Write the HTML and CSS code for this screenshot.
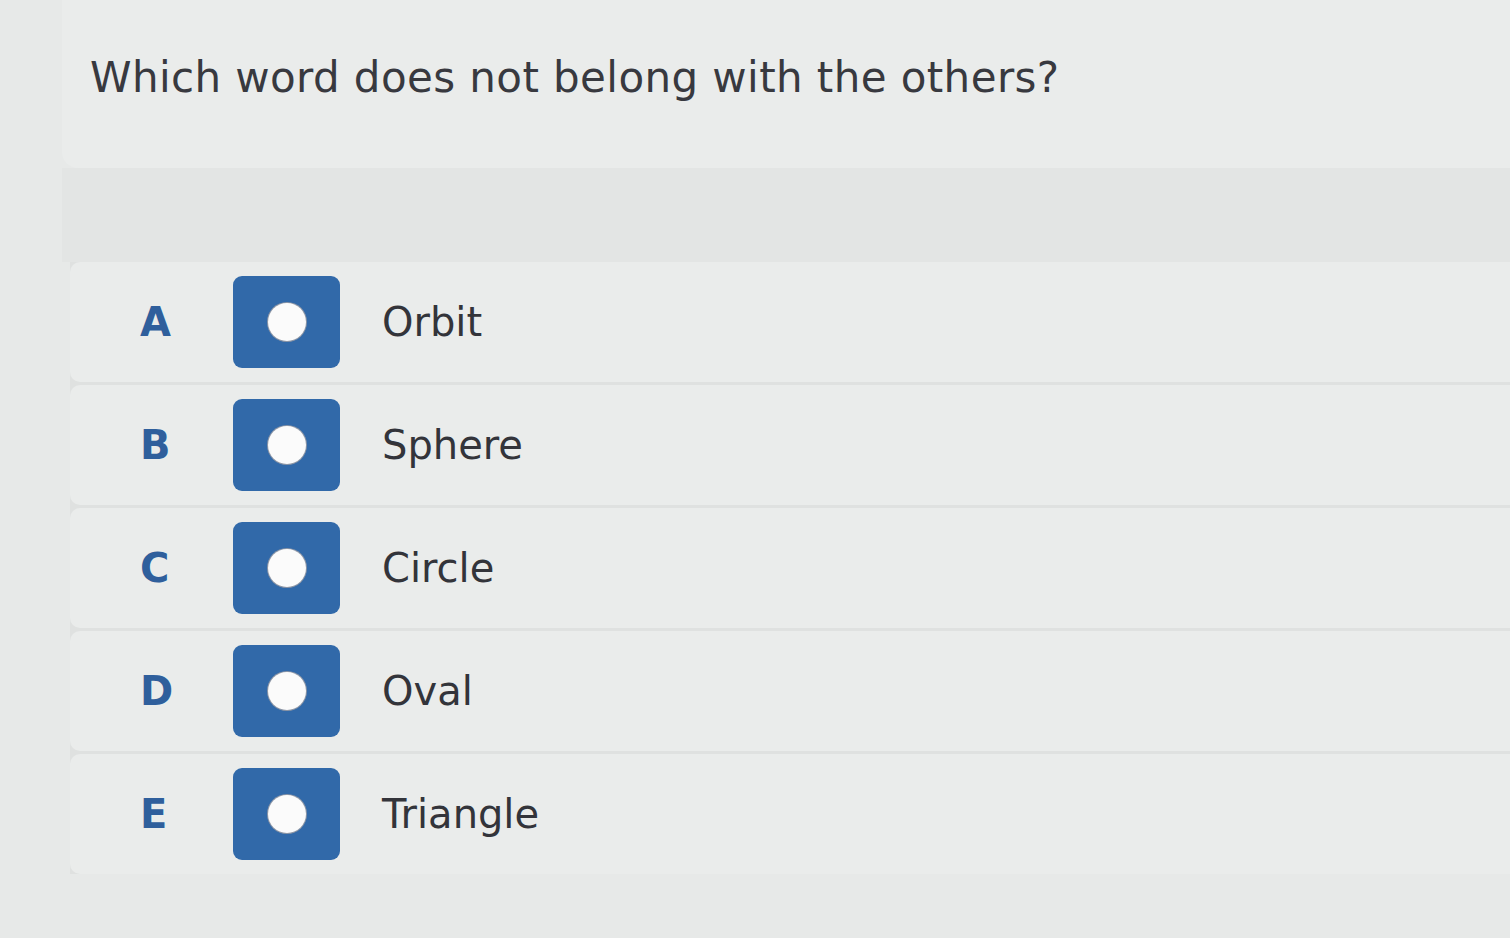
FILE: index.html
```html
<!DOCTYPE html>
<html>
<head>
<meta charset="utf-8">
<link rel="stylesheet" href="styles.css">
</head>
<body>
<div class="page">
  <div class="question">Which word does not belong with the others?</div>
  <div class="band"></div>
  <div class="options">
    <div class="option"><span class="letter">A</span><span class="radio"><span class="dot"></span></span><span class="label">Orbit</span></div>
    <div class="option"><span class="letter">B</span><span class="radio"><span class="dot"></span></span><span class="label">Sphere</span></div>
    <div class="option"><span class="letter">C</span><span class="radio"><span class="dot"></span></span><span class="label">Circle</span></div>
    <div class="option"><span class="letter">D</span><span class="radio"><span class="dot"></span></span><span class="label">Oval</span></div>
    <div class="option"><span class="letter">E</span><span class="radio"><span class="dot"></span></span><span class="label">Triangle</span></div>
  </div>
</div>
</body>
</html>
```
FILE: styles.css
```css
html, body {
  margin: 0;
  padding: 0;
  background: #e7e9e8;
  font-family: "DejaVu Sans", Verdana, sans-serif;
}
.page {
  width: 1510px;
  height: 938px;
  overflow: hidden;
  display: flex;
  flex-direction: column;
}
.question {
  margin-left: 62px;
  height: 168px;
  box-sizing: border-box;
  padding: 55px 0 0 28px;
  background: #eaeceb;
  border-radius: 0 0 0 16px;
  font-size: 42px;
  line-height: 1.1;
  color: #38393f;
  letter-spacing: 0.4px;
}
.band {
  height: 94px;
  background: #e3e5e4;
  margin-left: 62px;
}
.options {
  display: flex;
  flex-direction: column;
  gap: 3px;
  margin-left: 70px;
  background: #dfe1e0;
}
.option {
  display: flex;
  align-items: center;
  height: 120px;
  background: #eaeceb;
  border-radius: 10px 0 0 10px;
}
.letter {
  width: 70px;
  margin-left: 70px;
  margin-right: 23px;
  font-weight: bold;
  font-size: 40px;
  color: #2f5f9c;
}
.radio {
  width: 107px;
  height: 92px;
  background: #3169a9;
  border-radius: 9px;
  display: flex;
  align-items: center;
  justify-content: center;
}
.dot {
  width: 38px;
  height: 38px;
  border-radius: 50%;
  background: #fbfbfb;
  box-shadow: 0 0 0 1px #8d96a6;
}
.label {
  margin-left: 42px;
  font-size: 40px;
  color: #33343a;
}
```
